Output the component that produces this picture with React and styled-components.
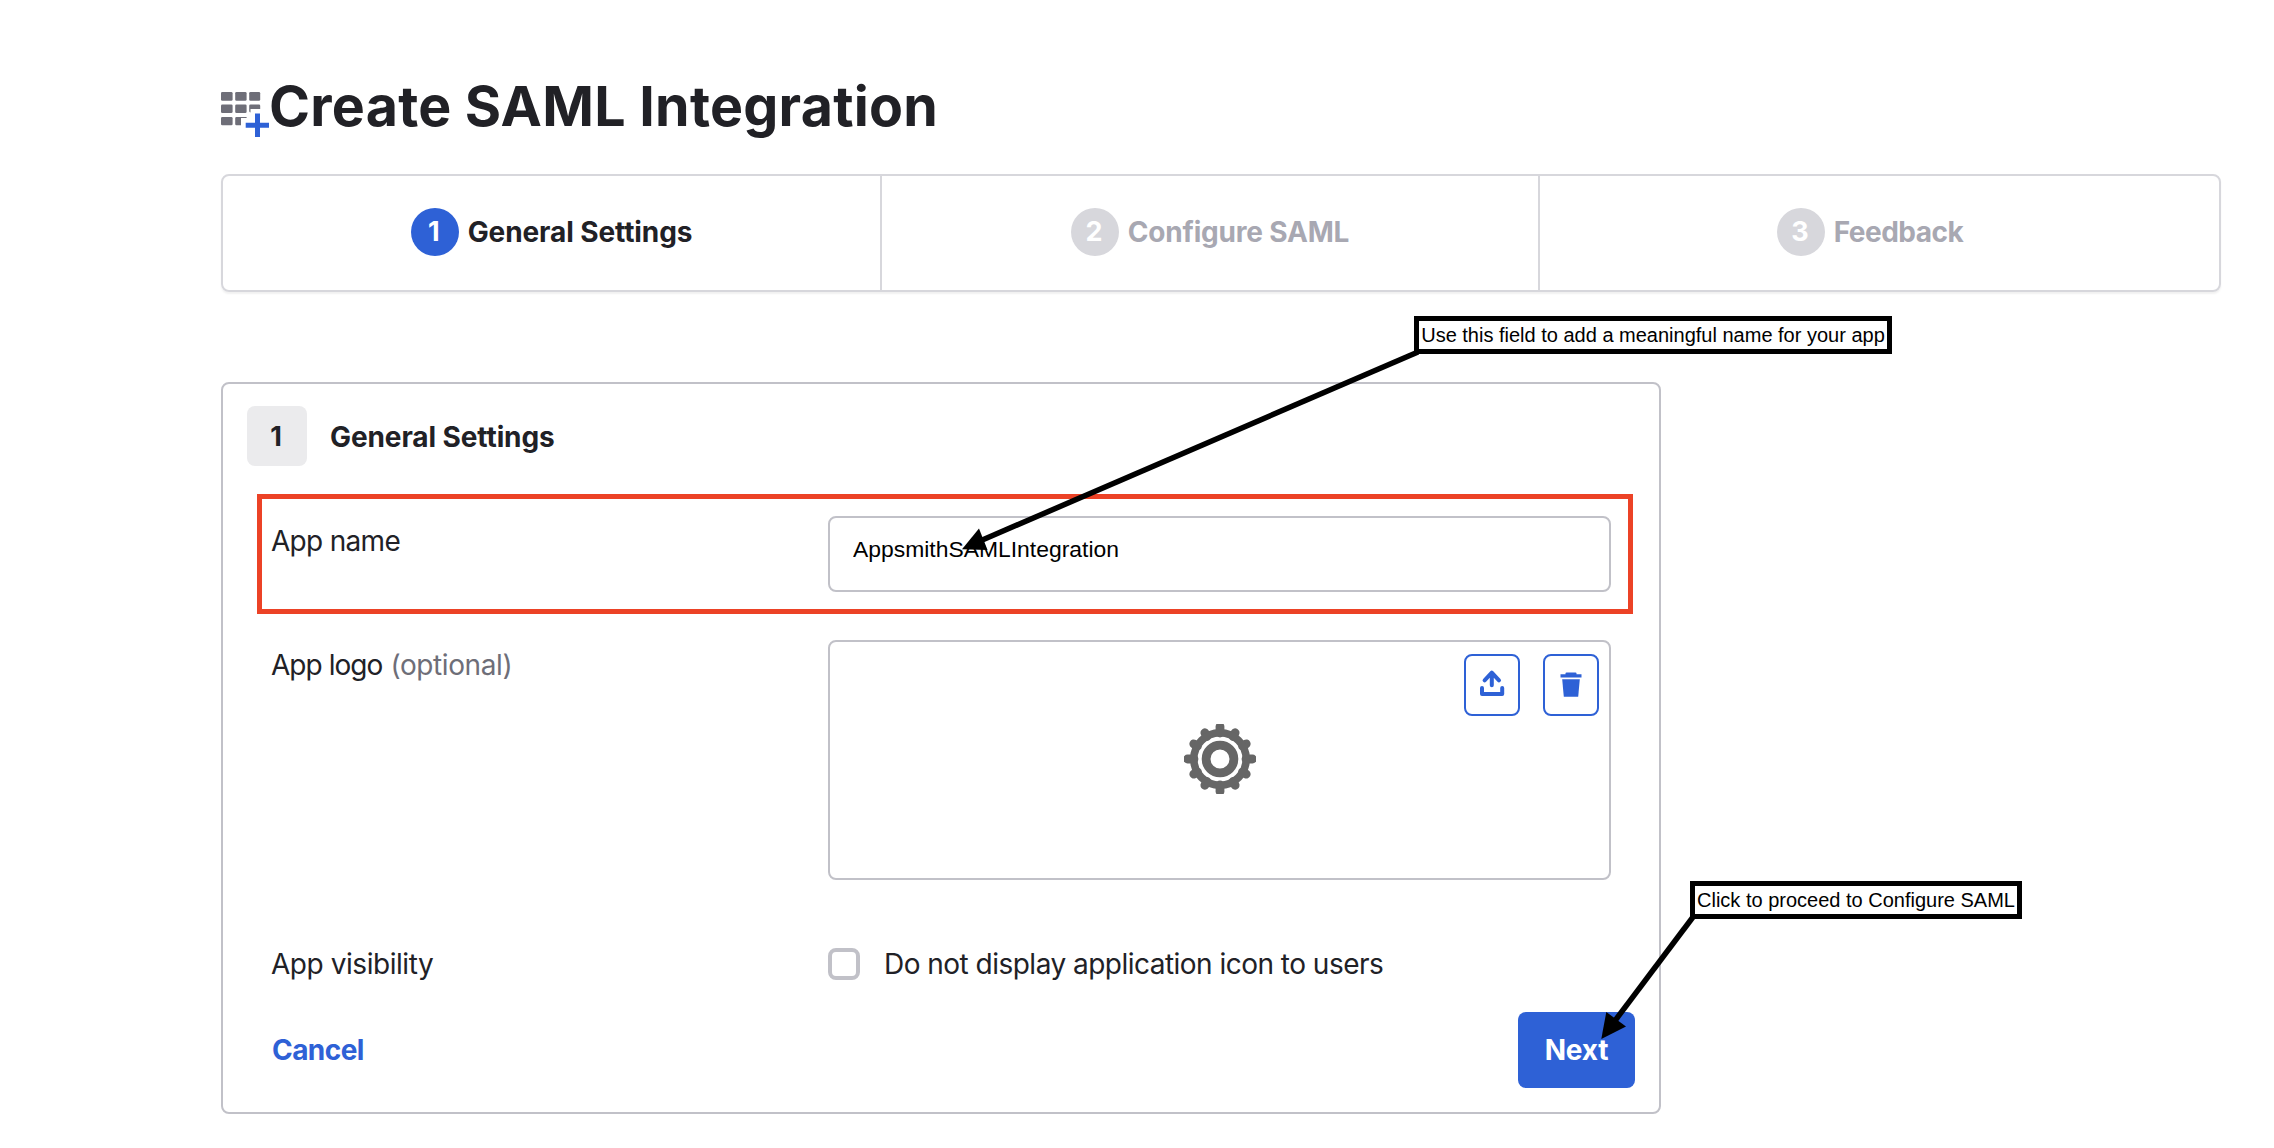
import React from "react";
import styled, { createGlobalStyle } from "styled-components";

const colors = {
  text: "#212126",
  muted: "#6e6e78",
  disabled: "#a8a8b2",
  disabledFill: "#d7d7dc",
  line: "#d7d7dc",
  border: "#c1c1c8",
  primary: "#2e61d6",
  highlight: "#ec4226",
};

const GlobalStyle = createGlobalStyle`
  *, *::before, *::after { box-sizing: border-box; }
  body {
    margin: 0;
    background: #fff;
    color: ${colors.text};
    font-family: Inter, "Liberation Sans", sans-serif;
    font-size: 28px;
    line-height: 40px;
  }
`;

const Page = styled.main`
  position: relative;
  display: flex;
  flex-direction: column;
  min-height: 1148px;
  padding: 66px 53px 34px 221px;
  overflow: hidden;
`;

const Header = styled.header`
  display: flex;
  height: 80px;
  margin-bottom: 28px;
`;

const AppsIcon = styled.svg`
  flex: none;
  width: 48px;
  height: 46px;
  margin-top: 26px;
`;

const Title = styled.h1`
  margin: 0;
  font-size: 55.5px;
  font-weight: 700;
  line-height: 80px;
  letter-spacing: 0.25px;
  white-space: nowrap;
`;

const Stepper = styled.ol`
  display: grid;
  grid-template-columns: 659px 658px 1fr;
  height: 118px;
  margin: 0;
  padding: 0;
  list-style: none;
  border: 2px solid ${colors.line};
  border-radius: 8px;
  box-shadow: 0 2px 2px rgba(0, 0, 0, 0.06);
`;

const Step = styled.li`
  display: flex;
  align-items: center;
  justify-content: center;
  gap: 9px;
  padding-bottom: 2px;
  color: ${(p) => (p.$active ? colors.text : colors.disabled)};
  font-weight: 700;
  letter-spacing: ${(p) => p.$tracking || "0"};
  border-right: 2px solid ${colors.line};

  &:last-child {
    padding-right: 19px;
    border-right: 0;
  }
`;

const StepNumber = styled.span`
  display: flex;
  align-items: center;
  justify-content: center;
  width: 48px;
  height: 48px;
  padding-right: 2px;
  border-radius: 50%;
  background: ${(p) => (p.$active ? colors.primary : colors.disabledFill)};
  color: #fff;
  font-size: 27px;
`;

const Card = styled.form`
  display: flex;
  flex-direction: column;
  width: 1440px;
  height: 732px;
  margin-top: 90px;
  padding: 22px 24px 24px;
  border: 2px solid ${colors.border};
  border-radius: 8px;
`;

const SectionHead = styled.div`
  display: flex;
  align-items: center;
  gap: 23px;
  margin-bottom: 28px;
`;

const SectionNumber = styled.span`
  display: flex;
  align-items: center;
  justify-content: center;
  width: 60px;
  height: 60px;
  padding: 1px 2px 0 0;
  border-radius: 8px;
  background: #ebebed;
  font-size: 27px;
  font-weight: 700;
`;

const SectionTitle = styled.h2`
  margin: 0;
  padding-top: 1px;
  font-size: 28px;
  font-weight: 700;
  letter-spacing: -0.1px;
`;

const Highlight = styled.div`
  width: 1376px;
  margin: 0 0 26px 10px;
  padding: 17px 17px 17px 9px;
  border: 5px solid ${colors.highlight};
`;

const Field = styled.div`
  display: grid;
  grid-template-columns: 557px 783px;
  align-items: ${(p) => (p.$center ? "center" : "start")};
`;

const Fields = styled.div`
  display: flex;
  flex-direction: column;
  gap: 68px;
  padding-left: 24px;
`;

const Label = styled.label`
  display: flex;
  gap: 8px;
  padding-top: ${(p) => (p.$inset ? "9px" : "0")};
  line-height: 32px;
  letter-spacing: ${(p) => p.$tracking};
  white-space: nowrap;
`;

const Optional = styled.span`
  color: ${colors.muted};
  letter-spacing: -0.4px;
`;

const TextInput = styled.input`
  width: 100%;
  height: 76px;
  padding: 0 23px 10px;
  border: 2px solid ${colors.border};
  border-radius: 8px;
  background: transparent;
  color: #000;
  font-family: "Liberation Sans", sans-serif;
  font-size: 22.9px;
  outline: none;
`;

const LogoBox = styled.div`
  display: grid;
  grid-template-columns: 1fr 72px 1fr;
  align-items: center;
  height: 240px;
  padding: 0 10px;
  border: 2px solid ${colors.border};
  border-radius: 8px;
`;

const GearIcon = styled.svg`
  grid-column: 2;
  width: 72px;
  height: 70px;
  margin-bottom: 2px;
  filter: blur(0.7px);
`;

const LogoActions = styled.div`
  display: flex;
  align-self: start;
  justify-content: flex-end;
  gap: 23px;
  padding-top: 12px;
`;

const IconButton = styled.button`
  display: flex;
  align-items: center;
  justify-content: center;
  width: 56px;
  height: 62px;
  padding: 0 0 4px;
  border: 2px solid ${colors.primary};
  border-radius: 8px;
  background: #fff;
  color: ${colors.primary};

  svg {
    width: 26px;
    height: 28px;
  }
`;

const CheckLabel = styled.label`
  display: flex;
  align-items: center;
  gap: 24px;
  height: 32px;
  line-height: 32px;
  letter-spacing: -0.52px;
  white-space: nowrap;
`;

const Checkbox = styled.input`
  appearance: none;
  width: 32px;
  height: 32px;
  margin: 0;
  border: 4px solid ${colors.border};
  border-radius: 8px;
  background: #fff;
`;

const Actions = styled.div`
  display: flex;
  align-items: center;
  justify-content: space-between;
  margin-top: 32px;
  padding-left: 25px;
`;

const Button = styled.button`
  height: 76px;
  width: ${(p) => (p.$primary ? "117px" : "auto")};
  padding: 0;
  border: 0;
  border-radius: 8px;
  background: ${(p) => (p.$primary ? colors.primary : "transparent")};
  color: ${(p) => (p.$primary ? "#fff" : colors.primary)};
  font: 700 28px/40px Inter, "Liberation Sans", sans-serif;
  letter-spacing: ${(p) => (p.$primary ? "-0.2px" : "-0.55px")};
`;

const Callout = styled.div`
  position: absolute;
  left: ${(p) => p.$x}px;
  top: ${(p) => p.$y}px;
  display: flex;
  align-items: center;
  justify-content: center;
  width: ${(p) => p.$w}px;
  height: 38px;
  border: 5px solid #000;
  background: #fff;
  color: #000;
  font-family: "Liberation Sans", sans-serif;
  font-size: 20px;
  line-height: 28px;
  white-space: nowrap;
`;

const Arrow = styled.svg`
  position: absolute;
  left: ${(p) => p.$x}px;
  top: ${(p) => p.$y}px;
  pointer-events: none;
`;

function Apps() {
  return (
    <AppsIcon viewBox="0 0 48 46">
      <g fill="#6e6e78">
        <rect x="0" y="0" width="11.6" height="8.8" rx="1.3" />
        <rect x="14.2" y="0" width="11.4" height="8.8" rx="1.3" />
        <rect x="28.2" y="0" width="11" height="8.8" rx="1.3" />
        <rect x="0" y="12.5" width="11.6" height="8.6" rx="1.3" />
        <rect x="14.2" y="12.5" width="11.4" height="8.6" rx="1.3" />
        <path d="M29.5 12.5H38q1.2 0 1.2 1.3V17H29.5v3.5q-1.3-.2-1.3-1.4v-5.3q0-1.3 1.3-1.3z" />
        <rect x="0" y="25" width="11.6" height="8.3" rx="1.3" />
        <path d="M15.5 25h10.1v1H20v7.3h-4.5q-1.3 0-1.3-1.3v-5.7q0-1.3 1.3-1.3z" />
      </g>
      <path d="M34 21.5h5v9.2h9v5h-9v9.3h-5v-9.3h-9.3v-5H34z" fill={colors.primary} />
    </AppsIcon>
  );
}

function Gear() {
  const teeth = Array.from({ length: 12 }, (_, i) => i * 30);
  return (
    <GearIcon viewBox="-36 -35 72 70">
      <g stroke="#666" fill="none">
        <g strokeWidth="8.8" strokeLinecap="round">
          {teeth.map((angle) => (
            <path
              key={angle}
              d={angle % 90 === 0 ? "M0-26V-32.5" : "M0-26V-30.3"}
              transform={`rotate(${angle})`}
            />
          ))}
        </g>
        <circle r="26.2" strokeWidth="7.6" />
        <circle r="13.9" strokeWidth="8.8" />
      </g>
    </GearIcon>
  );
}

function Upload() {
  return (
    <svg viewBox="0 0 26 28" fill="none" stroke="currentColor" strokeWidth="4" strokeLinecap="round" strokeLinejoin="round">
      <path d="M12.8 4v12.2M5.6 11.4l7.2-7.8 7.2 7.8" />
      <path d="M3 19v6h20.2v-6" />
    </svg>
  );
}

function Trash() {
  return (
    <svg viewBox="0 0 26 28" fill="currentColor">
      <path d="M2.5 5.2h5V4.3q0-.9 1-.9h9q1 0 1 .9v.9h5v3.4h-21z" />
      <path d="M4.2 10.3h17.6l-1.6 17.4H5.8z" />
    </svg>
  );
}

const steps = [
  { name: "General Settings", active: true, tracking: "-0.1px" },
  { name: "Configure SAML", tracking: "-0.2px" },
  { name: "Feedback", tracking: "-0.5px" },
];

export default function App() {
  return (
    <>
      <GlobalStyle />
      <Page>
        <Header>
          <Apps />
          <Title>Create SAML Integration</Title>
        </Header>

        <Stepper>
          {steps.map((step, i) => (
            <Step key={step.name} $active={step.active} $tracking={step.tracking}>
              <StepNumber $active={step.active}>{i + 1}</StepNumber>
              {step.name}
            </Step>
          ))}
        </Stepper>

        <Card onSubmit={(e) => e.preventDefault()}>
          <SectionHead>
            <SectionNumber>1</SectionNumber>
            <SectionTitle>General Settings</SectionTitle>
          </SectionHead>

          <Highlight>
            <Field>
              <Label htmlFor="app-name" $inset $tracking="-0.7px">App name</Label>
              <TextInput id="app-name" defaultValue="AppsmithSAMLIntegration" />
            </Field>
          </Highlight>

          <Fields>
            <Field>
              <Label as="div" $inset $tracking="-0.95px">
                App logo <Optional>(optional)</Optional>
              </Label>
              <LogoBox>
                <Gear />
                <LogoActions>
                  <IconButton type="button"><Upload /></IconButton>
                  <IconButton type="button"><Trash /></IconButton>
                </LogoActions>
              </LogoBox>
            </Field>
            <Field $center>
              <Label as="div" $tracking="-0.45px">App visibility</Label>
              <CheckLabel>
                <Checkbox type="checkbox" />
                Do not display application icon to users
              </CheckLabel>
            </Field>
          </Fields>

          <Actions>
            <Button type="button">Cancel</Button>
            <Button type="submit" $primary>Next</Button>
          </Actions>
        </Card>

        <Arrow $x={950} $y={340} width="480" height="220" viewBox="950 340 480 220">
          <path d="M1418 352L980 541" stroke="#000" strokeWidth="5.5" />
          <path d="M962 549.3L979 528.5L987.5 550z" />
        </Arrow>
        <Callout $x={1414} $y={316} $w={478}>Use this field to add a meaningful name for your app</Callout>

        <Arrow $x={1590} $y={905} width="115" height="145" viewBox="1590 905 115 145">
          <path d="M1693 917L1614 1022" stroke="#000" strokeWidth="5.5" />
          <path d="M1601.3 1039L1606.3 1012L1626 1026.5z" />
        </Arrow>
        <Callout $x={1690} $y={881} $w={332}>Click to proceed to Configure SAML</Callout>
      </Page>
    </>
  );
}
